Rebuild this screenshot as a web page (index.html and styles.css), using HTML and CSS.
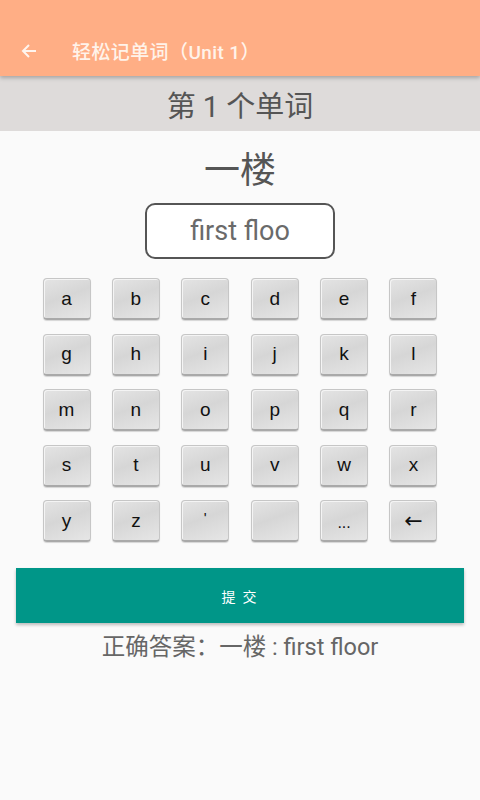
FILE: index.html
```html
<!DOCTYPE html>
<html lang="zh">
<head>
<meta charset="utf-8">
<link rel="stylesheet" href="styles.css">
</head>
<body>
<header class="appbar">
  <svg class="back" width="16" height="16" viewBox="0 0 16 16"><path d="M15 8H2M8 2L2 8l6 6" fill="none" stroke="#fff5ee" stroke-width="2"/></svg>
  <span class="apptitle">轻松记单词（Unit 1）</span>
</header>
<div class="band">第 1 个单词</div>
<main class="content">
  <div class="word">一楼</div>
  <div class="answer-box">first floo</div>
  <div class="keys">
    <div class="key">a</div><div class="key">b</div><div class="key">c</div><div class="key">d</div><div class="key">e</div><div class="key">f</div>
    <div class="key">g</div><div class="key">h</div><div class="key">i</div><div class="key">j</div><div class="key">k</div><div class="key">l</div>
    <div class="key">m</div><div class="key">n</div><div class="key">o</div><div class="key">p</div><div class="key">q</div><div class="key">r</div>
    <div class="key">s</div><div class="key">t</div><div class="key">u</div><div class="key">v</div><div class="key">w</div><div class="key">x</div>
    <div class="key">y</div><div class="key">z</div><div class="key key-apos">'</div><div class="key"></div><div class="key key-dots">...</div><div class="key key-arrow">←</div>
  </div>
  <button class="submit">提 交</button>
  <div class="result">正确答案：一楼 : first floor</div>
</main>
</body>
</html>
```
FILE: styles.css
```css
html, body {
  margin: 0;
  padding: 0;
  background: #fafafa;
  font-family: Roboto, "Noto Sans CJK SC", sans-serif;
  width: 480px;
  height: 800px;
  overflow: hidden;
}
.appbar {
  height: 76px;
  background: #ffae85;
  display: flex;
  align-items: center;
  box-shadow: 0 2px 4px rgba(0,0,0,0.25);
  position: relative;
  z-index: 2;
  padding-top: 24px;
  box-sizing: border-box;
}
.back {
  margin-left: 21px;
  margin-top: 2px;
}
.apptitle {
  margin-left: 35px;
  font-size: 19px;
  font-weight: 500;
  color: #fff3ea;
  letter-spacing: 0.4px;
}
.band {
  height: 55px;
  background: #dedbda;
  color: #555;
  font-size: 29px;
  display: flex;
  align-items: center;
  justify-content: center;
}
.content {
  display: flex;
  flex-direction: column;
  align-items: center;
}
.word {
  margin-top: 16px;
  font-size: 36px;
  color: #555;
  line-height: 48px;
}
.answer-box {
  margin-top: 8px;
  width: 190px;
  height: 56px;
  box-sizing: border-box;
  border: 2px solid #555;
  border-radius: 10px;
  background: #fff;
  display: flex;
  align-items: center;
  justify-content: center;
  font-size: 27px;
  color: #6a6a6a;
}
.keys {
  margin-top: 19px;
  display: grid;
  grid-template-columns: repeat(6, 48px);
  grid-auto-rows: 42px;
  column-gap: 21.4px;
  row-gap: 13.5px;
}
.key {
  box-sizing: border-box;
  border-radius: 4px;
  background: linear-gradient(160deg, #e4e4e4 0%, #d6d6d6 45%, #e6e6e6 100%);
  border: 1px solid #c6c6c6;
  border-bottom: 2px solid #a9a9a9;
  box-shadow: inset 1px 1px 0 #f4f4f4, 0 1px 1px rgba(0,0,0,0.15);
  display: flex;
  align-items: center;
  justify-content: center;
  font-family: "Liberation Sans", Arial, sans-serif;
  font-size: 19px;
  color: #111;
}
.key-apos {
  align-items: flex-start;
  padding-top: 8px;
  font-size: 15px;
}
.key-dots {
  font-size: 16px;
  padding-top: 4px;
}
.key-arrow {
  font-size: 22px;
  font-family: "DejaVu Sans", sans-serif;
}
.submit {
  margin-top: 26px;
  width: 448px;
  height: 55px;
  border: none;
  background: #009688;
  color: #fff;
  font-size: 14px;
  font-family: "Noto Sans CJK SC", sans-serif;
  letter-spacing: 2px;
  box-shadow: 0 2px 3px rgba(0,0,0,0.25);
  padding: 0;
}
.result {
  margin-top: 8px;
  font-size: 23.5px;
  color: #666;
  line-height: 32px;
}
```
